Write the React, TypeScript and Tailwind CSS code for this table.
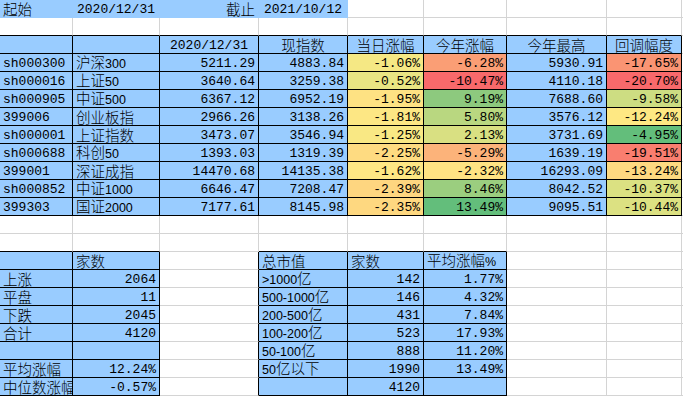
import React from "react";

type C = {
  t?: string;
  a?: "l" | "r" | "c";
  f?: "mono" | "mix";
  bg?: string;
  tb?: boolean;
  cover?: boolean;
};

const W = ["w-[73px]", "w-[87px]", "w-[99px]", "w-[89px]", "w-[76px]", "w-[83px]", "w-[100px]", "w-[75px]"];
const BLUE = "bg-[#99ccff]";

const main: [string, string, string, string, string, string, string, string, string, string, string][] = [
  ["sh000300", "沪深300", "5211.29", "4883.84", "-1.06%", "-6.28%", "5930.91", "-17.65%", "bg-[#f5e884]", "bg-[#fa9e75]", "bg-[#fa9473]"],
  ["sh000016", "上证50", "3640.64", "3259.38", "-0.52%", "-10.47%", "4110.18", "-20.70%", "bg-[#e9e583]", "bg-[#f8696b]", "bg-[#f8696b]"],
  ["sh000905", "中证500", "6367.12", "6952.19", "-1.95%", "9.19%", "7688.60", "-9.58%", "bg-[#fee283]", "bg-[#8dc97e]", "bg-[#cddd82]"],
  ["399006", "创业板指", "2966.26", "3138.26", "-1.81%", "5.80%", "3576.12", "-12.24%", "bg-[#fde784]", "bg-[#b9d780]", "bg-[#fee883]"],
  ["sh000001", "上证指数", "3473.07", "3546.94", "-1.25%", "2.13%", "3731.69", "-4.95%", "bg-[#f9e884]", "bg-[#d9e082]", "bg-[#63be7b]"],
  ["sh000688", "科创50", "1393.03", "1319.39", "-2.25%", "-5.29%", "1639.19", "-19.51%", "bg-[#fedb81]", "bg-[#fcb37a]", "bg-[#f97e6f]"],
  ["399001", "深证成指", "14470.68", "14135.38", "-1.62%", "-2.32%", "16293.09", "-13.24%", "bg-[#fee784]", "bg-[#ffe383]", "bg-[#fed981]"],
  ["sh000852", "中证1000", "6646.47", "7208.47", "-2.39%", "8.46%", "8042.52", "-10.37%", "bg-[#fed680]", "bg-[#9bce7f]", "bg-[#dbe182]"],
  ["399303", "国证2000", "7177.61", "8145.98", "-2.35%", "13.49%", "9095.51", "-10.44%", "bg-[#fed880]", "bg-[#63be7b]", "bg-[#dce182]"],
];

const left: [string, string][] = [
  ["上涨", "2064"],
  ["平盘", "11"],
  ["下跌", "2045"],
  ["合计", "4120"],
  ["", ""],
  ["平均涨幅", "12.24%"],
  ["中位数涨幅", "-0.57%"],
];

const right: [string, string, string][] = [
  [">1000亿", "142", "1.77%"],
  ["500-1000亿", "146", "4.32%"],
  ["200-500亿", "431", "7.84%"],
  ["100-200亿", "523", "17.93%"],
  ["50-100亿", "888", "11.20%"],
  ["50亿以下", "1990", "13.49%"],
  ["", "4120", ""],
];

function buildGrid(): C[][] {
  const g: C[][] = [];
  for (let r = 0; r < 22; r++) {
    const row: C[] = [];
    for (let c = 0; c < 8; c++) row.push({});
    g.push(row);
  }
  g[0][0] = { t: "起始", a: "l", f: "mix", bg: BLUE, cover: true };
  g[0][1] = { t: "2020/12/31", a: "c", f: "mono", bg: BLUE, cover: true };
  g[0][2] = { t: "截止", a: "r", f: "mix", bg: BLUE, cover: true };
  g[0][3] = { t: "2021/10/12", a: "c", f: "mono", bg: BLUE, cover: true };
  const hdr = ["", "", "2020/12/31", "现指数", "当日涨幅", "今年涨幅", "今年最高", "回调幅度"];
  hdr.forEach((h, i) => {
    g[2][i] = { t: h, a: "c", f: i === 2 ? "mono" : "mix", bg: BLUE, tb: true };
  });
  main.forEach((m, i) => {
    const r = 3 + i;
    g[r][0] = { t: m[0], a: "l", f: "mono", bg: BLUE, tb: true };
    g[r][1] = { t: m[1], a: "l", f: "mix", bg: BLUE, tb: true };
    g[r][2] = { t: m[2], a: "r", f: "mono", bg: BLUE, tb: true };
    g[r][3] = { t: m[3], a: "r", f: "mono", bg: BLUE, tb: true };
    g[r][4] = { t: m[4], a: "r", f: "mono", bg: m[8], tb: true };
    g[r][5] = { t: m[5], a: "r", f: "mono", bg: m[9], tb: true };
    g[r][6] = { t: m[6], a: "r", f: "mono", bg: BLUE, tb: true };
    g[r][7] = { t: m[7], a: "r", f: "mono", bg: m[10], tb: true };
  });
  g[14][0] = { bg: BLUE, tb: true };
  g[14][1] = { t: "家数", a: "l", f: "mix", bg: BLUE, tb: true };
  left.forEach((l, i) => {
    const r = 15 + i;
    g[r][0] = { t: l[0], a: "l", f: "mix", bg: BLUE, tb: true };
    g[r][1] = { t: l[1], a: "r", f: "mono", bg: BLUE, tb: true };
  });
  g[14][3] = { t: "总市值", a: "l", f: "mix", bg: BLUE, tb: true };
  g[14][4] = { t: "家数", a: "l", f: "mix", bg: BLUE, tb: true };
  g[14][5] = { t: "平均涨幅%", a: "l", f: "mix", bg: BLUE, tb: true };
  right.forEach((l, i) => {
    const r = 15 + i;
    g[r][3] = { t: l[0], a: "l", f: "mix", bg: BLUE, tb: true };
    g[r][4] = { t: l[1], a: "r", f: "mono", bg: BLUE, tb: true };
    g[r][5] = { t: l[2], a: "r", f: "mono", bg: BLUE, tb: true };
  });
  return g;
}

function Mix({ t }: { t: string }) {
  const parts = t.split(/([\u4e00-\u9fff]+)/).filter((p) => p.length > 0);
  return (
    <span className="leading-[17px]">
      {parts.map((p, i) =>
        /[\u4e00-\u9fff]/.test(p) ? (
          <span key={i} className="font-['Noto_Sans_CJK_SC',sans-serif] font-light text-[14.5px] leading-[17px]">
            {p}
          </span>
        ) : (
          <span key={i} className="font-['Liberation_Sans',sans-serif] text-[12.5px] leading-[17px]">
            {p}
          </span>
        )
      )}
    </span>
  );
}

function Cell({ c, w, rb, bb }: { c: C; w: string; rb: string; bb: string }) {
  const al = c.a === "r" ? "justify-end" : c.a === "c" ? "justify-center" : "justify-start";
  return (
    <div
      className={`${w} h-[18px] shrink-0 border-r border-b ${rb} ${bb} ${c.bg ?? "bg-white"} flex items-center ${al} px-[3px] overflow-hidden whitespace-nowrap leading-[17px] text-black`}
    >
      {c.t ? (
        c.f === "mono" ? (
          <span className="font-['Liberation_Mono',monospace] text-[13px] leading-[17px] pt-[1px]">{c.t}</span>
        ) : (
          <Mix t={c.t} />
        )
      ) : null}
    </div>
  );
}

export default function App() {
  const g = buildGrid();
  return (
    <div className="w-[683px] h-[397px] bg-white overflow-hidden flex flex-col">
      {g.map((row, r) => (
        <div key={r} className="flex w-full">
          {row.map((c, i) => {
            const rn = i < 7 ? row[i + 1] : {};
            const bn = r < 21 ? g[r + 1][i] : {};
            let rb = "border-r-[#d4d4d4]";
            if (c.tb || rn.tb) rb = "border-r-black";
            else if (c.cover) rb = "border-r-[#99ccff]";
            let bb = "border-b-[#d4d4d4]";
            if (c.tb || bn.tb) bb = "border-b-black";
            else if (c.cover) bb = "border-b-[#99ccff]";
            return <Cell key={i} c={c} w={W[i]} rb={rb} bb={bb} />;
          })}
          <div className="flex-1 h-[18px] border-b border-b-[#d4d4d4] bg-white" />
        </div>
      ))}
    </div>
  );
}
